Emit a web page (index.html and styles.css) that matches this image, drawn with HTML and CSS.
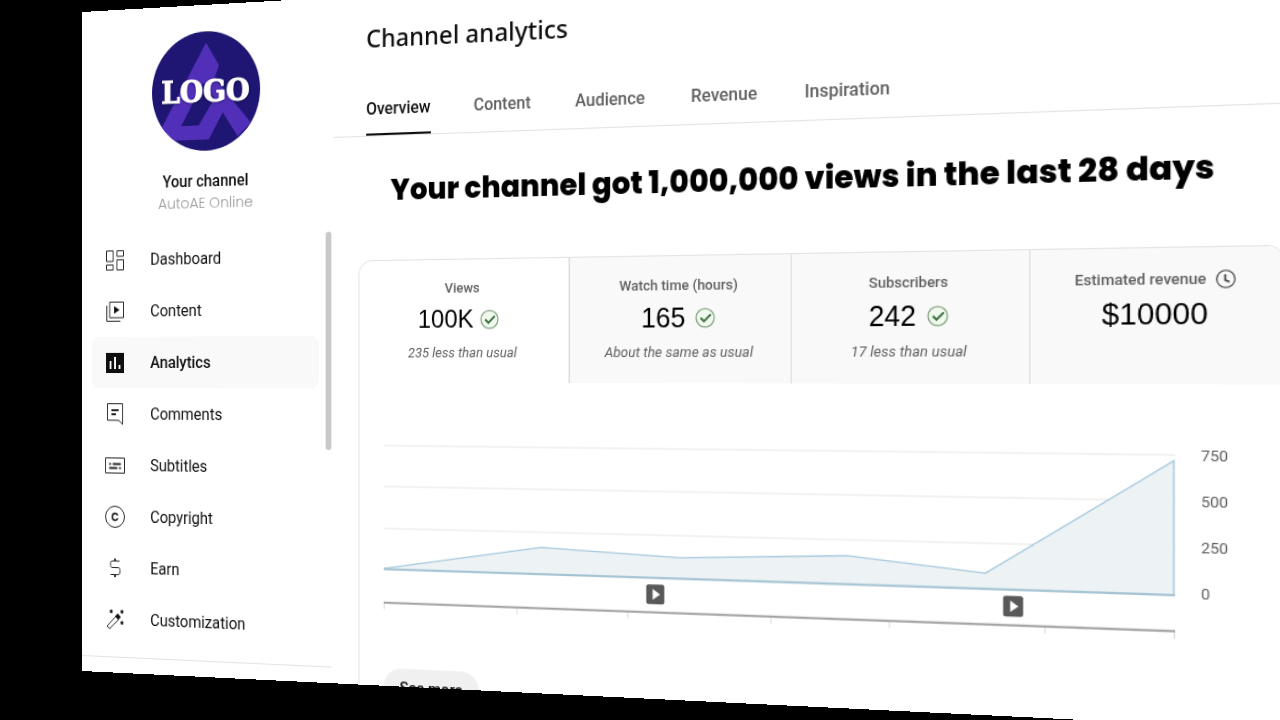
FILE: index.html
```html
<!DOCTYPE html>
<html lang="en">
<head>
    <meta charset="UTF-8">
    <meta name="viewport" content="width=device-width, initial-scale=1.0">
    <title>Channel analytics</title>
    <link rel="stylesheet" href="styles.css">
</head>
<body>
    <div class="stage">
        <div class="studio">
            <aside class="sidebar">
                <div class="channel">
                    <div class="channel-logo">
                        <svg viewBox="0 0 117 117" aria-hidden="true">
                            <path fill="#522fb8" d="M59 11 73 34 68 46 107 91 93 104 77 80 62 106H14L10 94zM56 50 32 92H51L68 66z"/>
                        </svg>
                        <span>LOGO</span>
                    </div>
                    <h2 class="channel-title">Your channel</h2>
                    <p class="channel-name">AutoAE Online</p>
                </div>
                <nav class="menu">
                    <a href="#dashboard" class="menu-item">
                        <svg viewBox="0 0 20 20"><path d="M.5.5h7.500v10.500H.5zM12 .5h7.500v5.500H12zM.5 14.500h7.500v5H.5zM12 9.500h7.500v10H12z"/></svg>
                        Dashboard
                    </a>
                    <a href="#content" class="menu-item">
                        <svg viewBox="0 0 20 20"><path d="M4 .5h15.500v15.500H4zM.8 4v15.500H16"/><path class="solid" d="M9 4.500v7.500l6-3.750z"/></svg>
                        Content
                    </a>
                    <a href="#analytics" class="menu-item active">
                        <svg viewBox="0 0 20 20"><path class="solid" d="M0 0h20v20H0z"/><path class="bars" d="M5 8v8M10 4v12M15 12v4"/></svg>
                        Analytics
                    </a>
                    <a href="#comments" class="menu-item">
                        <svg viewBox="0 0 20 20"><path d="M1.500-.5h17v20.500l-4.500-4h-12.500z"/><path class="thick" d="M6 6h8M6 10h5"/></svg>
                        Comments
                    </a>
                    <a href="#subtitles" class="menu-item">
                        <svg viewBox="0 0 20 20"><path d="M-.5 2.500h21v15H-.5z"/><path class="thick" d="M3.500 8.500h2M7.500 8.500h9M3.500 12.500h9M14.500 12.500h2"/></svg>
                        Subtitles
                    </a>
                    <a href="#copyright" class="menu-item">
                        <svg viewBox="0 0 20 20"><circle cx="10" cy="10" r="10.500"/><path class="thick" d="M12.800 8.600c-.3-1.300-1.200-2-2.700-2-1.900 0-3 1.200-3 3.400s1.100 3.400 3 3.400c1.500 0 2.400-.7 2.700-2"/></svg>
                        Copyright
                    </a>
                    <a href="#earn" class="menu-item">
                        <svg viewBox="0 0 20 20"><path d="M15 3H7C5.500 3 5 4 5 5v2.500C5 9 6 9.500 7 9.500h6c1.500 0 2.500.5 2.500 2V14c0 1.500-1 2.500-2.500 2.500H5"/><path class="thick" d="M10 .5v2.500M10 16.500v2.500"/></svg>
                        Earn
                    </a>
                    <a href="#customization" class="menu-item">
                        <svg viewBox="0 0 20 20"><path d="m1 17 10-10 3 3L4 19.500z"/><path class="solid" d="m10 7 3-3 3.500 3.500-3 3z"/><path class="thick" d="m4.500 1 2.500 2.500M7 1 4.500 3.500M16.500 1l2.500 2.500M19 1l-2.500 2.500M16.500 12l2.500 2.500M19 12l-2.500 2.500"/></svg>
                        Customization
                    </a>
                </nav>
                <div class="scrollbar"></div>
            </aside>

            <main class="main">
                <h1 class="page-title">Channel analytics</h1>
                <nav class="tabs">
                    <a href="#overview" class="tab active">Overview</a>
                    <a href="#tab-content" class="tab">Content</a>
                    <a href="#audience" class="tab">Audience</a>
                    <a href="#revenue" class="tab">Revenue</a>
                    <a href="#inspiration" class="tab">Inspiration</a>
                </nav>

                <h2 class="headline">Your channel got 1,000,000 views in the last 28 days</h2>

                <section class="card">
                    <div class="metrics">
                        <button type="button" class="metric active">
                            <span class="metric-label">Views</span>
                            <span class="metric-value">100K
                                <svg class="check" viewBox="0 0 18 18"><circle cx="9" cy="9" r="8"/><path d="m5 9 3 3 6-6"/></svg>
                            </span>
                            <em class="metric-note">235 less than usual</em>
                        </button>
                        <button type="button" class="metric">
                            <span class="metric-label">Watch time (hours)</span>
                            <span class="metric-value">165
                                <svg class="check" viewBox="0 0 18 18"><circle cx="9" cy="9" r="8"/><path d="m5 9 3 3 6-6"/></svg>
                            </span>
                            <em class="metric-note">About the same as usual</em>
                        </button>
                        <button type="button" class="metric">
                            <span class="metric-label">Subscribers</span>
                            <span class="metric-value">242
                                <svg class="check" viewBox="0 0 18 18"><circle cx="9" cy="9" r="8"/><path d="m5 9 3 3 6-6"/></svg>
                            </span>
                            <em class="metric-note">17 less than usual</em>
                        </button>
                        <button type="button" class="metric">
                            <span class="metric-label">Estimated revenue
                                <svg class="clock" viewBox="0 0 16 16"><circle cx="8" cy="8" r="7.300"/><path d="M7.500 4v5l3.500 1.500"/></svg>
                            </span>
                            <span class="metric-value revenue">$10000</span>
                        </button>
                    </div>

                    <div class="chart">
                        <svg class="plot" viewBox="0 0 721 160">
                            <path class="grid" d="M0 0h721M0 39h721M0 79h721"/>
                            <path class="area" d="M0 117 157 93 290 99 442 93 563 105 720 5V119H0z"/>
                            <path class="line" d="M0 117 157 93 290 99 442 93 563 105 720 5V119"/>
                            <path class="base" d="M0 117.500 721 119"/>
                            <path class="ticks" d="M.5 150v6M133.500 150v6M240.500 150v6M373.500 150v6M479.500 150v6M613.500 150v6M720.500 150v6"/>
                            <path class="axis" d="M0 149.500h721"/>
                            <g class="video"><rect x="258" y="124" width="17" height="18" rx="2"/><path d="m264 128 7 5-7 5z"/></g>
                            <g class="video"><rect x="578" y="124" width="17" height="18" rx="2"/><path d="m584 128 7 5-7 5z"/></g>
                        </svg>
                        <div class="scale">
                            <span>750</span>
                            <span>500</span>
                            <span>250</span>
                            <span>0</span>
                        </div>
                    </div>

                    <button type="button" class="see-more">See more</button>
                </section>
            </main>
        </div>
    </div>
</body>
</html>
```
FILE: styles.css
```css
* {
    box-sizing: border-box;
    margin: 0;
    padding: 0;
}

body {
    background: #000;
    color: #0f0f0f;
    font-family: Roboto, "Liberation Sans", sans-serif;
    overflow: hidden;
}

a {
    color: inherit;
    text-decoration: none;
}

button {
    border: none;
    background: none;
    font-family: inherit;
    color: inherit;
    cursor: pointer;
}

.stage {
    height: 100vh;
    padding: 12px 0 49px 82px;
    perspective: 3200px;
    perspective-origin: 82px 369px;
    overflow: hidden;
}

.studio {
    display: flex;
    height: 100%;
    background: #fff;
    overflow: hidden;
    transform: rotateY(-27.4deg);
    transform-origin: 0 357px;
}

/* Sidebar */
.sidebar {
    position: relative;
    flex: 0 0 272px;
}

.channel {
    padding-top: 26px;
    height: 223px;
    text-align: center;
}

.channel-logo {
    display: flex;
    align-items: center;
    justify-content: center;
    position: relative;
    width: 117px;
    height: 117px;
    margin: 0 auto 19px;
    border-radius: 50%;
    background: #1e1672;
    overflow: hidden;
}

.channel-logo svg {
    position: absolute;
    inset: 0;
}

.channel-logo span {
    position: relative;
    color: #fff;
    font-family: "DejaVu Serif", serif;
    font-size: 29px;
    font-weight: 900;
    -webkit-text-stroke: 1px #fff;
    text-shadow: 0 1px 3px rgba(0, 0, 0, 0.5);
}

.channel-title {
    font-size: 16px;
    font-weight: 500;
    line-height: 22px;
}

.channel-name {
    color: #999;
    font-family: Poppins, Inter, sans-serif;
    font-size: 15px;
    font-weight: 300;
    line-height: 20px;
}

.menu {
    margin-right: 2px;
    padding: 0 13px 12px 11px;
    border-bottom: 1px solid #e3e3e3;
}

.menu-item {
    display: flex;
    align-items: center;
    gap: 29px;
    height: 51px;
    padding-left: 16px;
    border-radius: 8px;
    font-size: 16px;
}

.menu-item.active {
    background: #f9f9f9;
    font-weight: 500;
}

.menu-item svg {
    width: 20px;
    height: 20px;
    fill: none;
    stroke: #222;
    stroke-width: 1;
    overflow: visible;
}

.menu-item .solid {
    fill: #0f0f0f;
    stroke: none;
}

.menu-item .thick {
    stroke-width: 1.8;
}

.menu-item .bars {
    stroke: #fff;
    stroke-width: 2;
}

.scrollbar {
    position: absolute;
    top: 225px;
    right: 2px;
    width: 6px;
    height: 210px;
    border-radius: 3px;
    background: #c9c9c9;
}

/* Main */
.main {
    flex: 1;
    min-width: 0;
}

.page-title {
    padding: 23px 34px 0;
    font-family: "Noto Sans", sans-serif;
    font-size: 24px;
    font-weight: 500;
    line-height: 36px;
}

.tabs {
    display: flex;
    gap: 43px;
    margin-top: 36px;
    padding-left: 34px;
    border-bottom: 1px solid #e3e3e3;
}

.tab {
    height: 39px;
    color: #606060;
    font-size: 16px;
    font-weight: 500;
    line-height: 28px;
}

.tab.active {
    color: #0f0f0f;
    border-bottom: 2px solid #0f0f0f;
}

.headline {
    padding: 32px 0 0 59px;
    color: #000;
    font-family: Poppins, Inter, sans-serif;
    font-size: 28px;
    font-weight: 800;
    line-height: 40px;
    white-space: nowrap;
}

/* Card */
.card {
    margin: 46px 64px 0 26px;
    border: 1px solid #e3e3e3;
    border-radius: 14px;
}

.metrics {
    display: grid;
    grid-template-columns: repeat(4, 1fr);
}

.metric {
    display: flex;
    flex-direction: column;
    align-items: center;
    height: 116px;
    padding-top: 17px;
    border-left: 1px solid #dcdcdc;
    background: #f9f9f9;
}

.metric.active {
    border-left: none;
    border-top-left-radius: 14px;
    background: none;
}

.metric:last-child {
    border-top-right-radius: 14px;
}

.metric-label {
    display: flex;
    align-items: center;
    gap: 8px;
    color: #606060;
    font-size: 13px;
    font-weight: 500;
    line-height: 20px;
}

.metric-value {
    display: flex;
    align-items: center;
    gap: 9px;
    color: #000;
    font-family: "Liberation Sans", Arial, sans-serif;
    font-size: 25px;
    line-height: 38px;
}

.metric.active .metric-value {
    gap: 6px;
    font-size: 24px;
    padding-right: 8px;
}

.metric-value.revenue {
    font-size: 26px;
}

.metric-note {
    color: #606060;
    font-size: 13px;
    line-height: 26px;
}

.check {
    width: 19px;
    height: 19px;
    fill: #f1f9ef;
    stroke: #8aa886;
    stroke-width: 1.2;
}

.check path {
    fill: none;
    stroke: #3d7040;
    stroke-width: 1.8;
}

.clock {
    width: 16px;
    height: 16px;
    fill: none;
    stroke: #444;
    stroke-width: 1.1;
}

.clock path {
    stroke-width: 1.6;
}

/* Chart */
.chart {
    display: flex;
    gap: 21px;
    padding: 41px 0 0 25px;
}

.plot {
    flex: 1;
    min-width: 0;
    margin-top: 19px;
    align-self: flex-start;
    fill: none;
    overflow: visible;
}

.grid {
    stroke: #f3f3f3;
    stroke-width: 2;
}

.area {
    fill: #edf3f5;
}

.line {
    stroke: #a9cade;
    stroke-width: 1.3;
}

.base {
    stroke: #a5c3d3;
    stroke-width: 2;
}

.ticks {
    stroke: #ddd;
}

.axis {
    stroke: #a3a3a3;
    stroke-width: 2;
}

.video rect {
    fill: #595959;
}

.video path {
    fill: #fff;
}

.scale {
    flex: 0 0 66px;
    display: flex;
    flex-direction: column;
    color: #606060;
    font-size: 13px;
    line-height: 39px;
}

.see-more {
    width: 96px;
    height: 36px;
    margin: 52px 25px 24px;
    border-radius: 18px;
    background: #f0f0f0;
    font-size: 15px;
    font-weight: 500;
}
```
